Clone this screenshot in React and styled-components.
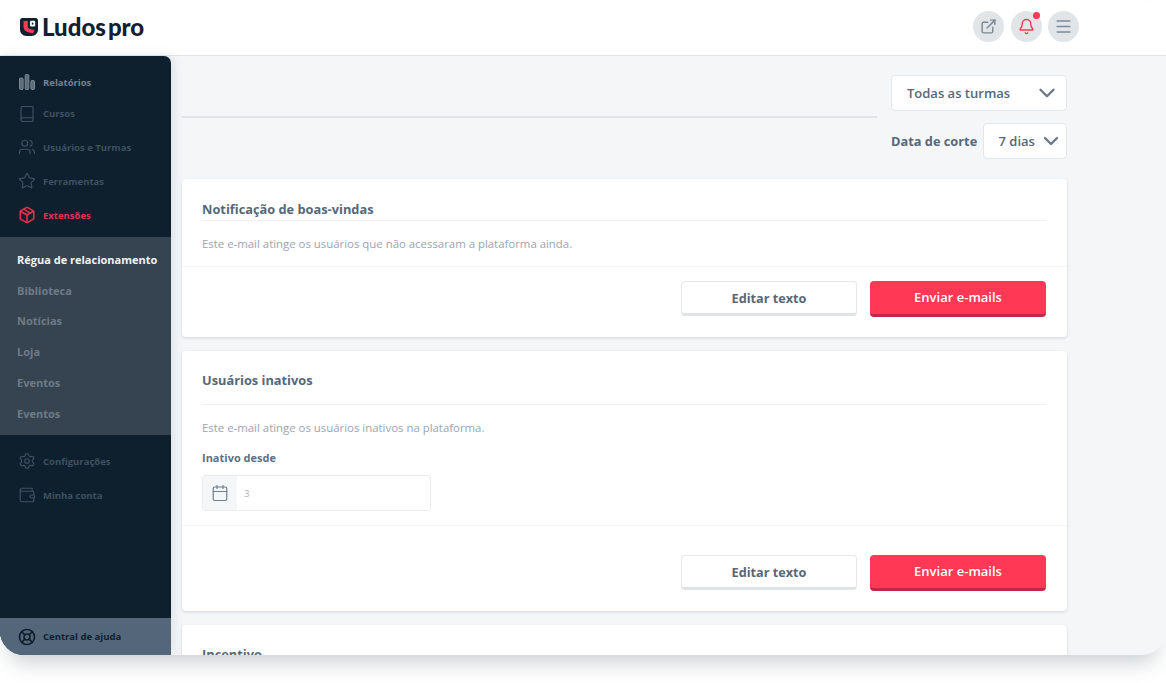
import React from "react";
import styled, { createGlobalStyle } from "styled-components";
import { ChevronDown, ExternalLink, Bell, Menu, Book, Users, Star, Package, Settings, Wallet, LifeBuoy, Calendar } from "lucide-react";

const GlobalStyle = createGlobalStyle`
  html, body {
    margin: 0;
    padding: 0;
    background: #fff;
    font-family: "Open Sans", "Noto Sans", sans-serif;
  }
`;

const Page = styled.div`
  width: 1166px;
  height: 683px;
  overflow: hidden;
`;

const Frame = styled.div`
  width: 1166px;
  height: 655px;
  border-radius: 24px;
  overflow: hidden;
  display: flex;
  flex-direction: column;
  background: #f4f6f8;
  box-shadow: 0 16px 20px -8px rgba(50, 65, 80, 0.24);
`;

const Header = styled.header`
  height: 56px;
  flex: none;
  box-sizing: border-box;
  background: #fff;
  border-bottom: 1px solid #e3e6e9;
  display: flex;
  align-items: center;
  justify-content: space-between;
  padding: 0 87px 2px 20px;
`;

const Logo = styled.div`
  display: flex;
  align-items: center;
  gap: 4px;
  font-family: "Lato", sans-serif;
  font-size: 24px;
  font-weight: 900;
  color: #10202e;
`;

const LogoPro = styled.span`
  margin-left: 2px;
`;

const HeaderActions = styled.div`
  display: flex;
  gap: 6.5px;
`;

const RoundButton = styled.div`
  position: relative;
  width: 31px;
  height: 31px;
  border-radius: 50%;
  background: #e1e5e8;
  color: ${(p) => p.$color || "#7b8997"};
  display: flex;
  align-items: center;
  justify-content: center;
`;

const Dot = styled.span`
  position: absolute;
  top: 1px;
  right: 2px;
  width: 7px;
  height: 7px;
  border-radius: 50%;
  background: #ff3855;
`;

const Body = styled.div`
  flex: 1;
  min-height: 0;
  display: flex;
`;

const Sidebar = styled.aside`
  width: 171px;
  flex: none;
  background: #0e202e;
  border-top-right-radius: 7px;
  overflow: hidden;
  display: flex;
  flex-direction: column;
  box-shadow: 2px 0 12px rgba(60, 75, 90, 0.12);
`;

const NavGroup = styled.div`
  display: flex;
  flex-direction: column;
  padding: ${(p) => p.$padding};
`;

const NavItem = styled.div`
  height: ${(p) => p.$height || "34px"};
  display: flex;
  align-items: center;
  gap: 7px;
  padding-left: 18px;
  font-size: 9.5px;
  font-weight: 700;
  color: ${(p) => p.$color || "#3f5060"};
`;

const SubMenu = styled.div`
  height: 198px;
  flex: none;
  display: flex;
  flex-direction: column;
  padding-top: 7px;
  box-sizing: border-box;
  background: #364451;
`;

const SubItem = styled.div`
  height: 30.8px;
  display: flex;
  align-items: center;
  padding-left: 17px;
  font-size: 11px;
  font-weight: 700;
  color: ${(p) => (p.$active ? "#f1f3f5" : "#6e7b87")};
`;

const HelpBar = styled.div`
  margin-top: auto;
  height: 37px;
  flex: none;
  display: flex;
  align-items: center;
  gap: 7px;
  padding-left: 18px;
  background: #54677a;
  font-size: 9.5px;
  font-weight: 700;
  color: #0e202e;
`;

const Main = styled.main`
  flex: 1;
  min-width: 0;
  overflow: hidden;
  padding: 19px 99px 0 11px;
`;

const Filters = styled.div`
  display: flex;
  gap: 14px;
  margin-bottom: 20px;
`;

const TitleRule = styled.div`
  flex: 1;
  height: 41px;
  border-bottom: 2px solid #e1e5e8;
`;

const FilterColumn = styled.div`
  width: 176px;
  flex: none;
  display: flex;
  flex-direction: column;
  gap: 12px;
`;

const FilterRow = styled.div`
  display: flex;
  align-items: center;
  justify-content: space-between;
  font-size: 12.8px;
  font-weight: 700;
  color: #566878;
`;

const Select = styled.div`
  width: ${(p) => p.$width};
  height: 36px;
  box-sizing: border-box;
  display: flex;
  align-items: center;
  justify-content: space-between;
  padding: 0 ${(p) => p.$pad} 0 15px;
  background: #fff;
  border: 1px solid #e3e7ea;
  border-radius: 4px;
  font-size: 13px;
  font-weight: 600;
  color: #566878;
`;

const Card = styled.section`
  height: ${(p) => p.$height};
  box-sizing: border-box;
  background: #fff;
  border-radius: 4px;
  margin-bottom: 14px;
  box-shadow: 0 1px 3px rgba(60, 75, 90, 0.18);
  display: flex;
  flex-direction: column;
`;

const CardContent = styled.div`
  padding: ${(p) => p.$top} 20px 0;
`;

const CardTitle = styled.h2`
  margin: 0;
  font-size: 12.8px;
  line-height: 20px;
  font-weight: 700;
  color: #566878;
`;

const TitleBlock = styled.div`
  height: ${(p) => p.$height};
  box-sizing: border-box;
  border-bottom: 1px solid #eef0f2;
`;

const Description = styled.p`
  margin: 15px 0 0;
  font-size: 11.4px;
  line-height: 16px;
  color: #9aa5af;
`;

const FieldLabel = styled.div`
  margin-top: 14px;
  font-size: 11px;
  line-height: 16px;
  font-weight: 700;
  color: #5f7080;
`;

const Field = styled.div`
  margin-top: 9px;
  width: 229px;
  height: 36px;
  box-sizing: border-box;
  display: flex;
  border: 1px solid #e9ecee;
  border-radius: 3px;
  overflow: hidden;
`;

const FieldIcon = styled.div`
  width: 34px;
  flex: none;
  display: flex;
  align-items: center;
  justify-content: center;
  background: #f4f6f8;
  color: #6f7f8e;
`;

const FieldValue = styled.div`
  display: flex;
  align-items: center;
  padding-left: 7px;
  font-size: 9.5px;
  color: #a9b2bb;
`;

const CardFooter = styled.div`
  margin-top: auto;
  height: ${(p) => p.$height};
  box-sizing: border-box;
  display: flex;
  justify-content: flex-end;
  gap: 13px;
  padding: ${(p) => p.$top} 21px 0 20px;
  border-top: 1px solid #f5f6f7;
`;

const EditButton = styled.button`
  width: 176px;
  height: 35px;
  box-sizing: border-box;
  background: #fff;
  border: 1px solid #e6e9ec;
  border-bottom: 3px solid #dfe4e9;
  border-radius: 4px;
  font: 700 12.7px "Open Sans", sans-serif;
  color: #566878;
`;

const SendButton = styled.button`
  width: 176px;
  height: 36px;
  box-sizing: border-box;
  padding: 0 0 1px;
  background: #ff3855;
  border: 0;
  border-bottom: 3px solid #c5254a;
  border-radius: 4px;
  font: 600 13px "Open Sans", sans-serif;
  color: #fff;
`;

const BarsIcon = () => (
  <svg width="18" height="18" viewBox="0 0 18 18" fill="#5d6c79" stroke="#7b8894" strokeWidth="1">
    <rect x="1.500" y="5" width="3.600" height="11.500" rx="1" />
    <rect x="7.200" y="1.500" width="3.600" height="15" rx="1" />
    <rect x="12.900" y="7.500" width="3.600" height="9" rx="1" />
  </svg>
);

const BrandMark = () => (
  <svg width="18" height="18" viewBox="0 0 18 18">
    <path d="M2.500 0H15.500C16.900 0 18 1.100 18 2.500V11.500C18 15.100 15.100 18 11.500 18H6.500C2.900 18 0 15.100 0 11.500V2.500C0 1.100 1.100 0 2.500 0Z" fill="#10202e" />
    <path d="M3.500 3H7.800V8.500C7.800 9.800 8.600 10.600 9.800 10.900L14.500 12.100L13 15.300L8 14.300C5.300 13.700 3.500 11.500 3.500 8.800Z" fill="#ff3855" />
    <rect x="10" y="2.800" width="5.200" height="5.700" rx="1.300" fill="#fff" />
    <rect x="11.800" y="4.600" width="1.600" height="2" fill="#10202e" />
  </svg>
);

const Icon = ({ as: Glyph, color = "#3f5060", size = 18, weight = 1.6 }) => (
  <Glyph size={size} color={color} strokeWidth={weight} />
);

const subItems = ["Régua de relacionamento", "Biblioteca", "Notícias", "Loja", "Eventos", "Eventos"];

function EmailCard({ height, titleHeight, top, title, description, footerHeight, footerTop, children }) {
  return (
    <Card $height={height}>
      <CardContent $top={top}>
        <TitleBlock $height={titleHeight}>
          <CardTitle>{title}</CardTitle>
        </TitleBlock>
        {description && <Description>{description}</Description>}
        {children}
      </CardContent>
      {footerHeight && (
        <CardFooter $height={footerHeight} $top={footerTop}>
          <EditButton>Editar texto</EditButton>
          <SendButton>Enviar e-mails</SendButton>
        </CardFooter>
      )}
    </Card>
  );
}

export default function App() {
  return (
    <Page>
      <GlobalStyle />
      <Frame>
        <Header>
          <Logo>
            <BrandMark />
            <span>Ludos<LogoPro>pro</LogoPro></span>
          </Logo>
          <HeaderActions>
            <RoundButton><ExternalLink size={17} strokeWidth={2} /></RoundButton>
            <RoundButton $color="#ff3855"><Bell size={17} strokeWidth={2} /><Dot /></RoundButton>
            <RoundButton><Menu size={19} strokeWidth={2} /></RoundButton>
          </HeaderActions>
        </Header>
        <Body>
          <Sidebar>
            <NavGroup $padding="11px 0 5px">
              <NavItem $height="30px" $color="#75828f"><BarsIcon />Relatórios</NavItem>
              <NavItem $height="33px"><Icon as={Book} />Cursos</NavItem>
              <NavItem><Icon as={Users} />Usuários e Turmas</NavItem>
              <NavItem><Icon as={Star} />Ferramentas</NavItem>
              <NavItem $color="#e8304f"><Icon as={Package} color="#e8304f" weight={2} />Extensões</NavItem>
            </NavGroup>
            <SubMenu>
              {subItems.map((item, i) => (
                <SubItem key={i} $active={i === 0}>{item}</SubItem>
              ))}
            </SubMenu>
            <NavGroup $padding="9px 0 0">
              <NavItem><Icon as={Settings} />Configurações</NavItem>
              <NavItem><Icon as={Wallet} />Minha conta</NavItem>
            </NavGroup>
            <HelpBar><Icon as={LifeBuoy} color="#0e202e" weight={2.2} />Central de ajuda</HelpBar>
          </Sidebar>
          <Main>
            <Filters>
              <TitleRule />
              <FilterColumn>
                <Select $width="176px" $pad="6px">Todas as turmas<ChevronDown size={26} strokeWidth={2.2} color="#6b7a88" /></Select>
                <FilterRow>
                  Data de corte
                  <Select $width="84.500px" $pad="3px">7 dias<ChevronDown size={24} strokeWidth={2.4} color="#6b7a88" /></Select>
                </FilterRow>
              </FilterColumn>
            </Filters>
            <EmailCard
              height="158px"
              top="20px"
              titleHeight="22px"
              title="Notificação de boas-vindas"
              description="Este e-mail atinge os usuários que não acessaram a plataforma ainda."
              footerHeight="71px"
              footerTop="14px"
            />
            <EmailCard
              height="260px"
              top="19px"
              titleHeight="35px"
              title="Usuários inativos"
              description="Este e-mail atinge os usuários inativos na plataforma."
              footerHeight="86px"
              footerTop="29px"
            >
              <FieldLabel>Inativo desde</FieldLabel>
              <Field>
                <FieldIcon><Calendar size={18} strokeWidth={1.6} /></FieldIcon>
                <FieldValue>3</FieldValue>
              </Field>
            </EmailCard>
            <EmailCard height="120px" top="19px" titleHeight="34px" title="Incentivo" />
          </Main>
        </Body>
      </Frame>
    </Page>
  );
}
